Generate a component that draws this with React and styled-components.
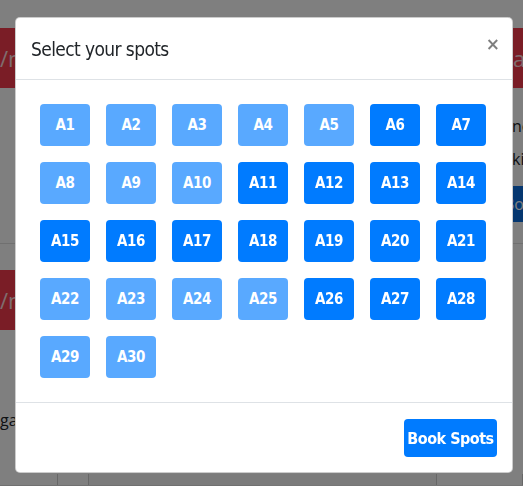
import styled, { createGlobalStyle } from 'styled-components';

const GlobalStyle = createGlobalStyle`
  html, body {
    margin: 0;
    padding: 0;
    overflow: hidden;
    background: #ffffff;
    font-family: "DejaVu Sans", sans-serif;
  }
  * {
    box-sizing: border-box;
  }
`;

const spots = Array.from({ length: 30 }, (_, i) => ({
  label: `A${i + 1}`,
  taken: [1, 2, 3, 4, 5, 8, 9, 10, 22, 23, 24, 25, 29, 30].includes(i + 1),
}));

const App = () => {
  return (
    <>
      <GlobalStyle />
      <StPage>
        <StColumn>
          <StCard>
            <StCardHeader>/month</StCardHeader>
            <StCardBody />
          </StCard>
          <StCard>
            <StCardHeader>/month</StCardHeader>
            <StCardBody>
              <StLine $top={52}>gated parking</StLine>
            </StCardBody>
          </StCard>
        </StColumn>
        <StRightColumn>
          <StCard>
            <StCardHeader $indent={15}>ain</StCardHeader>
            <StCardBody>
              <StLine $indent={14}>nearby</StLine>
              <StLine $indent={14}>kiosk</StLine>
              <StBgButton>Book</StBgButton>
            </StCardBody>
          </StCard>
        </StRightColumn>
      </StPage>
      <StBottomRow>
        <StCell $w={58} />
        <StCell $w={31} />
        <StCell $w={348} $light />
        <StCell $w={86} />
      </StBottomRow>

      <StBackdrop>
        <StModal>
          <StHeader>
            <StTitle>Select your spots</StTitle>
            <StClose aria-label="Close">×</StClose>
          </StHeader>
          <StBody>
            {spots.map((s) => (
              <StSpot key={s.label} disabled={s.taken}>
                {s.label}
              </StSpot>
            ))}
          </StBody>
          <StFooter>
            <StPrimary>Book Spots</StPrimary>
          </StFooter>
        </StModal>
      </StBackdrop>
    </>
  );
};

export default App;

/* page behind the dialog */

const StPage = styled.div`
  display: flex;
  justify-content: space-between;
  padding-top: 28px;
  height: 474px;
  font-family: "Open Sans", "DejaVu Sans", sans-serif;
  color: #212529;
`;

const StColumn = styled.div`
  width: 260px;
  display: flex;
  flex-direction: column;
  gap: 26px;
`;

const StRightColumn = styled.div`
  width: 25px;
  overflow: hidden;
  white-space: nowrap;
`;

const StCard = styled.div`
  border-bottom: 1px solid #e0e0e0;
`;

const StCardHeader = styled.div`
  height: 60px;
  background: #f53a4c;
  color: #ffd9dd;
  font-size: 22px;
  line-height: 60px;
  padding-left: ${(p) => p.$indent || 0}px;
  white-space: nowrap;
  overflow: hidden;
`;

const StCardBody = styled.div`
  height: 155px;
  padding-top: 22px;
`;

const StLine = styled.div`
  font-size: 16px;
  line-height: 33px;
  margin-top: ${(p) => p.$top || 0}px;
  padding-left: ${(p) => p.$indent || 0}px;
  white-space: nowrap;
`;

const StBgButton = styled.div`
  margin-top: 10px;
  height: 36px;
  background: #0a6ee0;
  color: #ffffff;
  font-size: 16px;
  line-height: 36px;
  padding-left: 6px;
`;

const StBottomRow = styled.div`
  display: flex;
  height: 12px;
  border-bottom: 1px solid #ececec;
`;

const StCell = styled.div`
  width: ${(p) => p.$w}px;
  border-right: 1px solid #cfcfcf;
  background: ${(p) => (p.$light ? '#f7f7f7' : 'transparent')};
`;

/* dialog */

const StBackdrop = styled.div`
  position: fixed;
  inset: 0;
  background: rgba(0, 0, 0, 0.5);
  padding: 17px 10px 0 15px;
  font-stretch: condensed;
`;

const StModal = styled.div`
  width: 498px;
  background: #ffffff;
  border: 1px solid rgba(0, 0, 0, 0.2);
  border-radius: 5px;
  overflow: hidden;
`;

const StHeader = styled.div`
  display: flex;
  align-items: center;
  justify-content: space-between;
  padding: 16px 15px 15px 15px;
  border-bottom: 1px solid #dee2e6;
`;

const StTitle = styled.h5`
  margin: 0;
  font-size: 19px;
  font-weight: 400;
  letter-spacing: -0.6px;
  line-height: 30px;
  color: #212529;
`;

const StClose = styled.button`
  border: none;
  background: transparent;
  padding: 0 2px;
  margin: -10px -5px 0 0;
  font-family: "DejaVu Sans", sans-serif;
  font-size: 17px;
  font-weight: 700;
  color: #000000;
  opacity: 0.5;
  cursor: pointer;
`;

const StBody = styled.div`
  display: flex;
  flex-wrap: wrap;
  padding: 16px;
`;

const StSpot = styled.button`
  width: 50px;
  height: 42px;
  margin: 8px;
  border: none;
  border-radius: 4px;
  background: #007bff;
  color: #ffffff;
  font-family: inherit;
  font-stretch: condensed;
  font-size: 15px;
  font-weight: 700;
  letter-spacing: -0.4px;
  cursor: pointer;

  &:disabled {
    opacity: 0.65;
    cursor: default;
  }
`;

const StFooter = styled.div`
  display: flex;
  justify-content: flex-end;
  padding: 16px 15px 15px;
  border-top: 1px solid #dee2e6;
`;

const StPrimary = styled.button`
  width: 93px;
  height: 38px;
  padding: 0;
  border: none;
  border-radius: 4px;
  background: #007bff;
  color: #ffffff;
  font-family: inherit;
  font-stretch: condensed;
  font-size: 16px;
  font-weight: 700;
  letter-spacing: -0.5px;
  white-space: nowrap;
  cursor: pointer;
`;
